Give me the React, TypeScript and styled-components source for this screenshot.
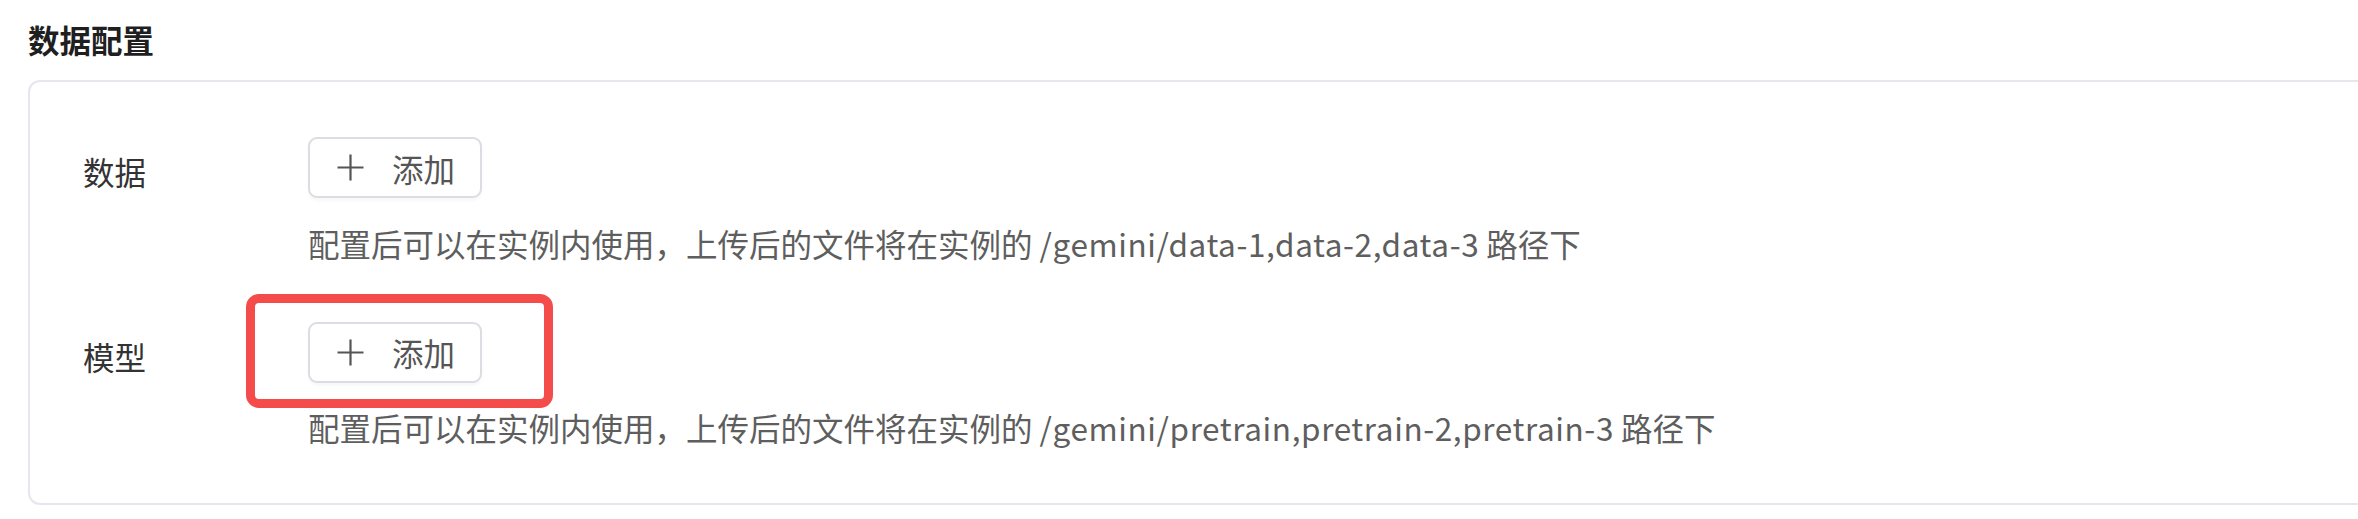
import React from "react";
import styled, { createGlobalStyle } from "styled-components";

const GlobalStyle = createGlobalStyle`
  html, body {
    margin: 0;
    padding: 0;
    background: #ffffff;
  }
  body {
    font-family: "Noto Sans CJK SC", "Noto Sans", sans-serif;
  }
`;

const Page = styled.div`
  width: 2358px;
  height: 519px;
  box-sizing: border-box;
  padding: 16px 0 0 28px;
  overflow: hidden;
  background: #ffffff;
`;

const SectionTitle = styled.h2`
  margin: 0 0 17px 0;
  font-size: 31.5px;
  line-height: 47px;
  font-weight: 700;
  color: #1f1f1f;
`;

const Card = styled.div`
  box-sizing: border-box;
  margin-right: -40px;
  border: 2px solid #e5e7ed;
  border-radius: 12px;
  padding: 55px 0 52px 53px;
  display: flex;
  flex-direction: column;
  gap: 55px;
  background: #ffffff;
`;

const Row = styled.div`
  display: grid;
  grid-template-columns: 225px 1fr;
  align-items: start;
`;

const Label = styled.div`
  font-size: 31.5px;
  line-height: 61px;
  padding-top: 4px;
  color: #333333;
`;

const Content = styled.div`
  display: flex;
  flex-direction: column;
  align-items: flex-start;
`;

const ButtonWrap = styled.div`
  position: relative;
  display: inline-flex;
`;

const AddButton = styled.button`
  box-sizing: border-box;
  height: 61px;
  width: 174px;
  padding: 0 0 0 27px;
  display: inline-flex;
  align-items: center;
  gap: 28px;
  border: 2px solid #dcdde2;
  border-radius: 9px;
  background: #ffffff;
  box-shadow: 0 3px 3px rgba(0, 0, 0, 0.03);
  font-family: "Noto Sans CJK SC", "Noto Sans", sans-serif;
  font-size: 31.5px;
  color: #555555;
  cursor: pointer;
`;

const PlusIcon = styled.svg`
  width: 27px;
  height: 27px;
  flex: none;
`;

const Highlight = styled.div`
  position: absolute;
  left: -62px;
  top: -28px;
  right: -71px;
  bottom: -25px;
  border: 9px solid #f44c4a;
  border-radius: 13px;
  pointer-events: none;
`;

const Hint = styled.div`
  margin-top: 21.5px;
  font-size: 31.5px;
  line-height: 47px;
  color: #5e5e5e;
  white-space: nowrap;
`;

const PathText = styled.span`
  letter-spacing: 0.6px;
`;

const Plus = () => (
  <PlusIcon viewBox="0 0 27 27" aria-hidden>
    <path d="M13.5 0.5V26.5M0.5 13.5H26.5" stroke="#555555" strokeWidth="2.2" fill="none" />
  </PlusIcon>
);

type ItemProps = { label: string; path: string; highlighted?: boolean };

const ConfigItem = ({ label, path, highlighted }: ItemProps) => (
  <Row>
    <Label>{label}</Label>
    <Content>
      <ButtonWrap>
        <AddButton type="button">
          <Plus />
          <span>添加</span>
        </AddButton>
        {highlighted && <Highlight />}
      </ButtonWrap>
      <Hint>
        配置后可以在实例内使用，上传后的文件将在实例的 <PathText>{path}</PathText> 路径下
      </Hint>
    </Content>
  </Row>
);

export default function App() {
  return (
    <>
      <GlobalStyle />
      <Page>
        <SectionTitle>数据配置</SectionTitle>
        <Card>
          <ConfigItem label="数据" path="/gemini/data-1,data-2,data-3" />
          <ConfigItem label="模型" path="/gemini/pretrain,pretrain-2,pretrain-3" highlighted />
        </Card>
      </Page>
    </>
  );
}
